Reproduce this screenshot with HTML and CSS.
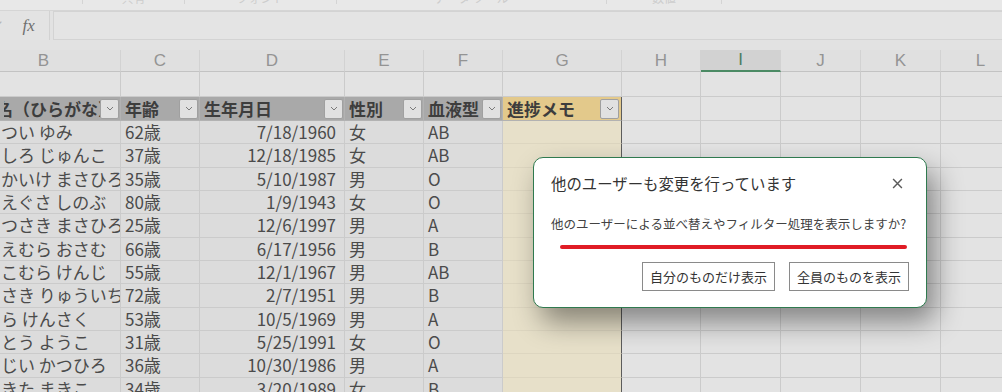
FILE: index.html
```html
<!DOCTYPE html>
<html lang="ja">
<head>
    <meta charset="UTF-8">
    <meta name="viewport" content="width=device-width, initial-scale=1.0">
    <title>共同編集 - 並べ替え</title>
    <link rel="stylesheet" href="styles.css">
</head>
<body>
<div class="app">
    <div class="ribbon">
        <div class="grp g1"></div>
        <div class="grp g2"><span>共有</span></div>
        <div class="grp g3"><span>フォント</span></div>
        <div class="grp g4"><span>データ ツール</span></div>
        <div class="grp g5"><span>数値</span></div>
        <div class="grp g6"></div>
    </div>

    <div class="formula">
        <div class="fx-area"><span class="check">✓</span><span class="fx">fx</span></div>
        <div class="fx-input"></div>
    </div>

    <div class="sheet">
        <!-- column letters -->
        <div class="col b">B</div>
        <div class="col">C</div>
        <div class="col">D</div>
        <div class="col">E</div>
        <div class="col">F</div>
        <div class="col">G</div>
        <div class="col">H</div>
        <div class="col sel">I</div>
        <div class="col">J</div>
        <div class="col">K</div>
        <div class="col">L</div>

        <!-- blank row -->
        <div class="c"></div><div class="c"></div><div class="c"></div><div class="c"></div><div class="c"></div><div class="c"></div>
        <div class="c"></div><div class="c"></div><div class="c"></div><div class="c"></div><div class="c"></div>

        <!-- table header -->
        <div class="c th first"><span class="lbl">名（ひらがな）</span><span class="flt"><svg viewBox="0 0 8 5"><path d="M1 1l3 3 3-3"/></svg></span></div>
        <div class="c th"><span class="lbl">年齢</span><span class="flt"><svg viewBox="0 0 8 5"><path d="M1 1l3 3 3-3"/></svg></span></div>
        <div class="c th"><span class="lbl">生年月日</span><span class="flt"><svg viewBox="0 0 8 5"><path d="M1 1l3 3 3-3"/></svg></span></div>
        <div class="c th"><span class="lbl">性別</span><span class="flt"><svg viewBox="0 0 8 5"><path d="M1 1l3 3 3-3"/></svg></span></div>
        <div class="c th"><span class="lbl">血液型</span><span class="flt"><svg viewBox="0 0 8 5"><path d="M1 1l3 3 3-3"/></svg></span></div>
        <div class="c th memo"><span class="lbl">進捗メモ</span><span class="flt"><svg viewBox="0 0 8 5"><path d="M1 1l3 3 3-3"/></svg></span></div>
        <div class="c"></div><div class="c"></div><div class="c"></div><div class="c"></div><div class="c"></div>

        <!-- data -->
        <div class="c td name">つい ゆみ</div><div class="c td">62歳</div><div class="c td num">7/18/1960</div><div class="c td">女</div><div class="c td">AB</div><div class="c td memo"></div>
        <div class="c"></div><div class="c"></div><div class="c"></div><div class="c"></div><div class="c"></div>

        <div class="c td name">しろ じゅんこ</div><div class="c td">37歳</div><div class="c td num">12/18/1985</div><div class="c td">女</div><div class="c td">AB</div><div class="c td memo"></div>
        <div class="c"></div><div class="c"></div><div class="c"></div><div class="c"></div><div class="c"></div>

        <div class="c td name">かいけ まさひろ</div><div class="c td">35歳</div><div class="c td num">5/10/1987</div><div class="c td">男</div><div class="c td">O</div><div class="c td memo"></div>
        <div class="c"></div><div class="c"></div><div class="c"></div><div class="c"></div><div class="c"></div>

        <div class="c td name">えぐさ しのぶ</div><div class="c td">80歳</div><div class="c td num">1/9/1943</div><div class="c td">女</div><div class="c td">O</div><div class="c td memo"></div>
        <div class="c"></div><div class="c"></div><div class="c"></div><div class="c"></div><div class="c"></div>

        <div class="c td name">つさき まさひろ</div><div class="c td">25歳</div><div class="c td num">12/6/1997</div><div class="c td">男</div><div class="c td">A</div><div class="c td memo"></div>
        <div class="c"></div><div class="c"></div><div class="c"></div><div class="c"></div><div class="c"></div>

        <div class="c td name">えむら おさむ</div><div class="c td">66歳</div><div class="c td num">6/17/1956</div><div class="c td">男</div><div class="c td">B</div><div class="c td memo"></div>
        <div class="c"></div><div class="c"></div><div class="c"></div><div class="c"></div><div class="c"></div>

        <div class="c td name">こむら けんじ</div><div class="c td">55歳</div><div class="c td num">12/1/1967</div><div class="c td">男</div><div class="c td">AB</div><div class="c td memo"></div>
        <div class="c"></div><div class="c"></div><div class="c"></div><div class="c"></div><div class="c"></div>

        <div class="c td name">さき りゅういち</div><div class="c td">72歳</div><div class="c td num">2/7/1951</div><div class="c td">男</div><div class="c td">B</div><div class="c td memo"></div>
        <div class="c"></div><div class="c"></div><div class="c"></div><div class="c"></div><div class="c"></div>

        <div class="c td name">ら けんさく</div><div class="c td">53歳</div><div class="c td num">10/5/1969</div><div class="c td">男</div><div class="c td">A</div><div class="c td memo"></div>
        <div class="c"></div><div class="c"></div><div class="c"></div><div class="c"></div><div class="c"></div>

        <div class="c td name">とう ようこ</div><div class="c td">31歳</div><div class="c td num">5/25/1991</div><div class="c td">女</div><div class="c td">O</div><div class="c td memo"></div>
        <div class="c"></div><div class="c"></div><div class="c"></div><div class="c"></div><div class="c"></div>

        <div class="c td name">じい かつひろ</div><div class="c td">36歳</div><div class="c td num">10/30/1986</div><div class="c td">男</div><div class="c td">A</div><div class="c td memo"></div>
        <div class="c"></div><div class="c"></div><div class="c"></div><div class="c"></div><div class="c"></div>

        <div class="c td name">きた まきこ</div><div class="c td">34歳</div><div class="c td num">3/20/1989</div><div class="c td">女</div><div class="c td">B</div><div class="c td memo"></div>
        <div class="c"></div><div class="c"></div><div class="c"></div><div class="c"></div><div class="c"></div>
    </div>

    <div class="dialog">
        <div class="dlg-head">
            <span class="dlg-title">他のユーザーも変更を行っています</span>
            <span class="dlg-close"><svg viewBox="0 0 10 10"><path d="M1 1l8 8M9 1l-8 8"/></svg></span>
        </div>
        <p class="dlg-msg">他のユーザーによる並べ替えやフィルター処理を表示しますか?</p>
        <div class="mark"></div>
        <div class="dlg-actions">
            <button class="btn">自分のものだけ表示</button>
            <button class="btn">全員のものを表示</button>
        </div>
    </div>
</div>
</body>
</html>
```

FILE: styles.css
```css
* {
    box-sizing: border-box;
}
body {
    margin: 0;
    background: #e2e2e2;
    font-family: "Noto Sans CJK JP", "Noto Sans", sans-serif;
    color: #4b4b4b;
    overflow: hidden;
}
.app {
    position: relative;
    width: 1002px;
    height: 392px;
    overflow: hidden;
}

/* ribbon bottom edge */
.ribbon {
    display: flex;
    height: 11px;
    background: #e8e8e8;
    border-bottom: 1px solid #d5d5d5;
}
.grp {
    height: 4px;
    display: flex;
    justify-content: center;
    align-items: flex-end;
    overflow: hidden;
    border-right: 1px solid #d4d4d4;
    font-size: 12px;
    line-height: 12px;
    color: #cdcdcd;
}
.g1 { width: 83px; }
.g2 { width: 102px; }
.g3 { width: 152px; }
.g4 { width: 270px; }
.g5 { width: 115px; }
.g6 { flex: 1; border-right: none; }

/* formula bar */
.formula {
    display: flex;
    height: 29px;
    gap: 3px;
}
.fx-area {
    width: 50px;
    display: flex;
    align-items: center;
    background: #e3e3e3;
    border-right: 1px solid #d2d2d2;
    overflow: hidden;
}
.check {
    margin-left: -8px;
    font-size: 14px;
    color: #b4b4b4;
}
.fx {
    margin-left: 21px;
    font-family: "Liberation Serif", serif;
    font-style: italic;
    font-size: 17px;
    color: #6f6f6f;
}
.fx-input {
    flex: 1;
    background: #e4e4e4;
    border: 1px solid #d3d3d3;
    border-right: none;
}

/* grid */
.sheet {
    display: grid;
    grid-template-columns: 121px 79px 145px 79px 79px 119px 79px 80px 80px 80px 80px;
    grid-template-rows: 22px 25px 24px;
    grid-auto-rows: 23.34px;
    margin-top: 10px;
    width: 1021px;
}
.c {
    display: flex;
    align-items: center;
    padding-left: 4px;
    background: #e3e3e3;
    border-right: 1px solid #cbcbcb;
    border-bottom: 1px solid #cbcbcb;
    font-size: 17px;
    line-height: 20px;
    white-space: nowrap;
}
.col {
    display: flex;
    align-items: center;
    justify-content: center;
    background: #e0e0e0;
    border-right: 1px solid #d2d2d2;
    border-bottom: 1px solid #c3c3c3;
    font-family: "Liberation Sans", sans-serif;
    font-size: 17px;
    color: #949494;
}
.col.b {
    padding-right: 33px;
}
.col.sel {
    background: #d2d2d2;
    color: #4d7d61;
    border-bottom: 2px solid #4b8a64;
}

.th {
    padding: 0 1px 0 4px;
    background: #a9a9a9;
    border-color: #b2b2b2;
    font-weight: bold;
    color: #3d3d3d;
}
.th .lbl {
    flex: 1;
    min-width: 0;
    overflow: hidden;
}
.th.first .lbl {
    text-indent: -8px;
}
.th.memo {
    background: #e3c98b;
    border-right-color: #5c5c5c;
    padding-right: 2px;
}
.flt {
    flex: none;
    width: 19px;
    height: 20px;
    display: flex;
    align-items: center;
    justify-content: center;
    background: #e1e1e1;
    border: 1px solid #a0a0a0;
    border-radius: 2px;
}
.flt svg {
    width: 8px;
    height: 5px;
    fill: none;
    stroke: #7a7a7a;
    stroke-width: 1;
}

.td {
    background: #dcdcdc;
}
.td.name {
    padding-left: 1px;
    overflow: hidden;
}
.td.num {
    justify-content: flex-end;
    padding-right: 8px;
}
.td.memo {
    background: #e7e0c9;
    border-bottom-color: #ddd6c0;
    border-right-color: #5c5c5c;
}

/* dialog */
.dialog {
    position: absolute;
    left: 533px;
    top: 157px;
    width: 394px;
    height: 151px;
    padding: 15px 17px 16px;
    display: flex;
    flex-direction: column;
    background: #fff;
    border: 1px solid #2f7a4f;
    border-radius: 10px;
    box-shadow: 8px 14px 28px rgba(0, 0, 0, 0.42);
}
.dlg-head {
    display: flex;
    justify-content: space-between;
    align-items: center;
    height: 20px;
}
.dlg-title {
    font-size: 15.4px;
    color: #333;
}
.dlg-close {
    width: 11px;
    height: 11px;
    margin-right: 6px;
    display: flex;
}
.dlg-close svg {
    width: 11px;
    height: 11px;
    fill: none;
    stroke: #5a5a5a;
    stroke-width: 1.3;
}
.dlg-msg {
    margin: 22px 0 0;
    font-size: 12.5px;
    line-height: 18px;
    color: #424242;
    white-space: nowrap;
}
.mark {
    height: 4px;
    margin: 12px 2px 0 9px;
    background: #e01c25;
    border-radius: 2px;
}
.dlg-actions {
    display: flex;
    justify-content: flex-end;
    gap: 14px;
    margin-top: 13px;
}
.btn {
    height: 29px;
    padding: 0 7px;
    background: #fff;
    border: 1px solid #8a8a8a;
    font-family: "Noto Sans CJK JP", sans-serif;
    font-size: 13px;
    color: #333;
}
```
